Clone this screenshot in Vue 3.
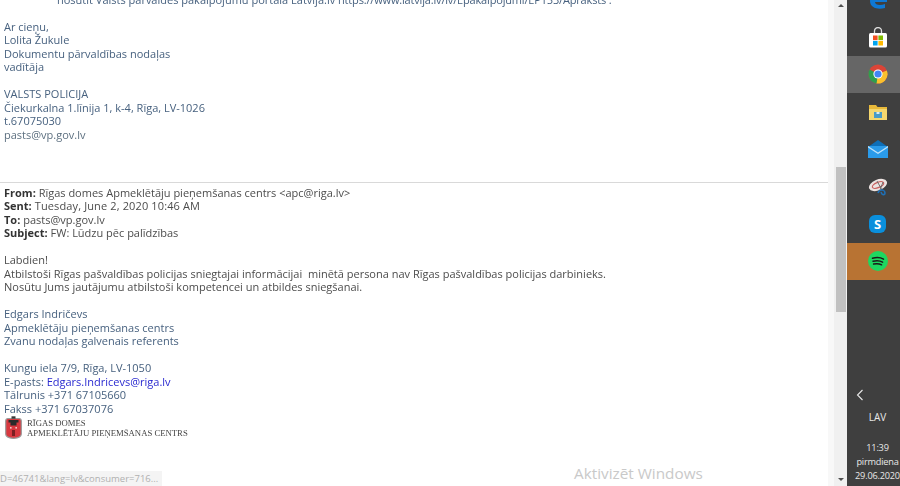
<script setup>
const top = [
  { t: 'Ar cieņu,' },
  { t: 'Lolita Žukule' },
  { t: 'Dokumentu pārvaldības nodaļas' },
  { t: 'vadītāja' },
  { t: '' },
  { t: 'VALSTS POLICIJA' },
  { t: 'Čiekurkalna 1.līnija 1, k-4, Rīga, LV-1026' },
  { t: 't.67075030' },
  { t: 'pasts@vp.gov.lv', c: 'muted' }
]
const head = [
  ['From:', 'Rīgas domes Apmeklētāju pieņemšanas centrs <apc@riga.lv>'],
  ['Sent:', 'Tuesday, June 2, 2020 10:46 AM'],
  ['To:', 'pasts@vp.gov.lv'],
  ['Subject:', 'FW: Lūdzu pēc palīdzības']
]
const body = [
  'Labdien!',
  'Atbilstoši Rīgas pašvaldības policijas sniegtajai informācijai\u00a0 minētā persona nav Rīgas pašvaldības policijas darbinieks.',
  'Nosūtu Jums jautājumu atbilstoši kompetencei un atbildes sniegšanai.'
]
const sig = ['Edgars Indričevs', 'Apmeklētāju pieņemšanas centrs', 'Zvanu nodaļas galvenais referents']
</script>

<template>
  <div class="screen">
    <main class="mail">
      <div class="first">nosūtīt Valsts pārvaldes pakalpojumu portālā Latvija.lv <span class="url">https://www.latvija.lv/lv/Epakalpojumi/EP153/Apraksts .</span></div>
      <div class="gap"></div>
      <div v-for="(l, i) in top" :key="i" class="line blue" :class="l.c">{{ l.t }}</div>
      <div class="rule"></div>
      <div v-for="h in head" :key="h[0]" class="line grey" :class="{ wide: h[0] === 'Sent:' }"><b>{{ h[0] }}</b> {{ h[1] }}</div>
      <div class="gap"></div>
      <div v-for="b in body" :key="b" class="line grey">{{ b }}</div>
      <div class="gap"></div>
      <div v-for="s in sig" :key="s" class="line blue">{{ s }}</div>
      <div class="gap"></div>
      <div class="line blue">Kungu iela 7/9, Rīga, LV-1050</div>
      <div class="line blue">E-pasts: <span class="link">Edgars.Indricevs@riga.lv</span></div>
      <div class="line blue">Tālrunis +371 67105660</div>
      <div class="line blue">Fakss +371 67037076</div>
      <div class="logo">
        <svg width="17" height="23" viewBox="0 0 17 23">
          <path d="M0.7 5 Q0.7 2.5 3 2.5 H14 Q16.3 2.5 16.3 5 V18 Q16.3 21.8 8.5 22.4 Q0.7 21.8 0.7 18Z" fill="#d8383f" stroke="#9a9a9a" stroke-width="1.2"/>
          <rect x="6.5" y="0.3" width="4" height="2.4" fill="#3a3a3a"/>
          <path d="M3.5 4h10v2.4h-2v3h-6v-3h-2z" fill="#2b2b2b"/>
          <rect x="5" y="11" width="1.6" height="1.6" fill="#f3c9c9"/>
          <rect x="10.4" y="11" width="1.6" height="1.6" fill="#f3c9c9"/>
          <rect x="7" y="14" width="3" height="6" fill="#7a1f22"/>
        </svg>
        <div class="logotext">
          <div>RĪGAS DOMES</div>
          <div>APMEKLĒTĀJU PIEŅEMŠANAS CENTRS</div>
        </div>
      </div>
    </main>

    <div class="strip"></div>

    <div class="scrollbar">
      <span class="arrow up"></span>
      <div class="thumb"></div>
      <span class="arrow down"></span>
    </div>

    <aside class="taskbar">
      <div class="tile">
        <svg width="20" height="20" viewBox="0 0 20 20"><path d="M2 11C2 5 6 2 11 2c5 0 8 4 8 8v2H7c0 3 5 4 10 2v4c-7 2-15 0-15-7z" fill="#0f78d4"/></svg>
      </div>
      <div class="tile">
        <svg width="20" height="21" viewBox="0 0 20 21">
          <path d="M6.5 6V4a3.5 3.5 0 0 1 7 0v2" fill="none" stroke="#ddd" stroke-width="1.3"/>
          <rect x="1" y="6" width="18" height="14.5" rx="1.5" fill="#fff"/>
          <rect x="5" y="8.5" width="4.6" height="4.6" fill="#f25022"/>
          <rect x="10.4" y="8.5" width="4.6" height="4.6" fill="#7fba00"/>
          <rect x="5" y="13.9" width="4.6" height="4.6" fill="#00a4ef"/>
          <rect x="10.4" y="13.9" width="4.6" height="4.6" fill="#ffb900"/>
        </svg>
      </div>
      <div class="tile active">
        <svg width="20" height="20" viewBox="0 0 20 20">
          <circle cx="10" cy="10" r="9.5" fill="#db4437"/>
          <path d="M10 10 L18.8 6.5 A9.5 9.5 0 0 1 8 19.3Z" fill="#fbc02d"/>
          <path d="M10 10 L8.5 19.4 A9.5 9.5 0 0 1 1.6 5.5Z" fill="#2e9e4f"/>
          <circle cx="10" cy="10" r="4.6" fill="#fff"/>
          <circle cx="10" cy="10" r="3.6" fill="#4285f4"/>
        </svg>
      </div>
      <div class="tile">
        <svg width="18" height="16" viewBox="0 0 18 16">
          <path d="M0 1h7l1.5 2H18v13H0z" fill="#e8b93a"/>
          <path d="M0 5h18v11H0z" fill="#f5d76e"/>
          <rect x="5" y="8" width="8" height="6" fill="#4a9bc7"/>
          <rect x="7.5" y="8" width="3" height="2" fill="#d8ecf5"/>
        </svg>
      </div>
      <div class="tile">
        <svg width="20" height="18" viewBox="0 0 20 18">
          <path d="M0 7L10 0l10 7v1H0z" fill="#0e6fb8"/>
          <rect y="6" width="20" height="12" fill="#2a9bea"/>
          <path d="M0 6l10 6.5L20 6v1.5L10 14 0 7.5z" fill="#bfe3fa"/>
        </svg>
      </div>
      <div class="tile">
        <svg width="20" height="18" viewBox="0 0 20 18">
          <ellipse cx="10" cy="7" rx="9.5" ry="5.5" transform="rotate(-22 10 7)" fill="#ece3e1"/>
          <ellipse cx="10" cy="7" rx="6" ry="2.6" transform="rotate(-22 10 7)" fill="none" stroke="#c9605f" stroke-width="1.2"/>
          <path d="M9 3l5 9M15 4l-3 8" stroke="#666" stroke-width="0.9"/>
          <path d="M10 15c1-3 3-3 4-3s3 1 3 3-2 2-3 1l-1-2" fill="none" stroke="#1f6fb5" stroke-width="1.6"/>
        </svg>
      </div>
      <div class="tile">
        <div class="skype">S</div>
      </div>
      <div class="tile spotify">
        <svg width="20" height="20" viewBox="0 0 20 20">
          <circle cx="10" cy="10" r="10" fill="#1ed760"/>
          <path d="M4.5 7.2c4-1 8-.8 11 .9M5 10.2c3.4-.8 7-.6 9.6.9M5.6 13c3-.6 5.8-.4 8 .8" fill="none" stroke="#1a1a1a" stroke-width="1.5" stroke-linecap="round"/>
        </svg>
      </div>
      <div class="tray">
        <svg class="chev" width="8" height="12" viewBox="0 0 8 12"><path d="M6.5 1L1.5 6l5 5" fill="none" stroke="#e8e8e8" stroke-width="1.1"/></svg>
        <div class="lang">LAV</div>
        <div class="clock">
          <div>11:39</div>
          <div>pirmdiena</div>
          <div>29.06.2020</div>
        </div>
      </div>
    </aside>

    <div class="status">D=46741&amp;lang=lv&amp;consumer=716...</div>
    <div class="watermark">Aktivizēt Windows</div>
  </div>
</template>

<style>
html, body { margin: 0; background: #fff; }
</style>

<style scoped>
.screen {
  position: relative;
  display: flex;
  width: 900px;
  height: 486px;
  overflow: hidden;
  background: #fff;
  font-family: "Open Sans", "Liberation Sans", sans-serif;
}
.mail {
  flex: 0 0 828px;
  box-sizing: border-box;
  margin-top: -7.5px;
  padding-left: 4px;
  padding-right: 12px;
  font-size: 11px;
  line-height: 13.5px;
  filter: blur(0.3px);
}
.first { padding-left: 53px; color: #47617f; white-space: nowrap; height: 13.5px; }
.url { letter-spacing: -0.17px; }
.gap { height: 13.5px; }
.line { height: 13.5px; white-space: nowrap; }
.blue { color: #47617f; }
.grey { color: #4c4c4c; }
.muted { color: #5d7080; }
.link { color: #2a2ad0; }
.wide { letter-spacing: 0.13px; }
b { font-weight: 700; color: #333; letter-spacing: 0; }
.rule { height: 1px; background: #d9d9d9; margin: 40.5px -12px 3px -4px; }
.logo { display: flex; align-items: center; gap: 5px; height: 24px; margin-top: 0.5px; margin-left: 1px; }
.logotext {
  font-family: "Liberation Serif", serif;
  font-size: 8.7px;
  line-height: 10px;
  color: #444;
  white-space: nowrap;
}
.strip { flex: 0 0 6px; background: #f8f8f8; }
.scrollbar {
  flex: 0 0 13px;
  position: relative;
  background: #f0f0f0;
}
.thumb {
  position: absolute;
  top: 167px;
  left: 1.5px;
  width: 10px;
  height: 145px;
  background: #c1c1c1;
}
.arrow { position: absolute; left: 3.5px; border-left: 3px solid transparent; border-right: 3px solid transparent; }
.up { top: 4px; border-bottom: 3px solid #505050; }
.down { bottom: 5px; border-top: 3px solid #505050; }
.taskbar {
  flex: 1;
  display: flex;
  flex-direction: column;
  background: #3f3f3f;
  color: #e8e8e8;
}
.tile {
  flex: 0 0 37.4px;
  display: flex;
  align-items: center;
  justify-content: center;
  padding-left: 8px;
}
.tile:first-child { margin-top: -19px; }
.active { background: #666; }
.spotify { background: #b87333; }
.skype {
  width: 17px;
  height: 18px;
  border-radius: 6px;
  background: #0a8fdc;
  color: #fff;
  font: 700 13px/18px "Open Sans", sans-serif;
  text-align: center;
}
.tray {
  margin-top: auto;
  position: relative;
  box-sizing: border-box;
  height: 97px;
  padding-left: 8px;
  text-align: center;
  font-size: 10px;
  line-height: 14px;
}
.chev { position: absolute; left: 9px; top: 0; }
.lang { padding-top: 21px; height: 31px; }
.clock { white-space: nowrap; font-size: 9.2px; letter-spacing: -0.2px; }
.status {
  position: absolute;
  left: 0;
  bottom: 0;
  width: 162px;
  height: 15px;
  background: #f4f4f4;
  color: #b0b0b0;
  font-size: 9.5px;
  line-height: 15px;
  white-space: nowrap;
  overflow: hidden;
}
.watermark {
  position: absolute;
  left: 574px;
  top: 463px;
  color: #c9c9c9;
  font: 15.3px/20px "Open Sans", sans-serif;
}
</style>
